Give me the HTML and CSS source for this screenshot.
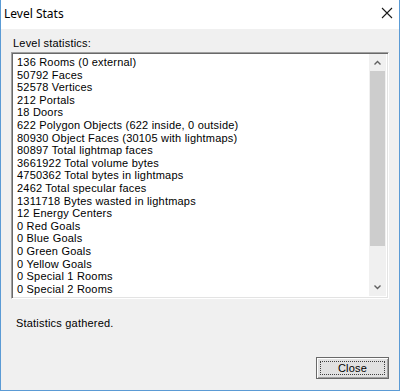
FILE: index.html
```html
<!DOCTYPE html>
<html>
<head>
<meta charset="utf-8">
<link rel="stylesheet" href="styles.css">
</head>
<body>
<div class="window">
  <div class="titlebar">
    <span class="title">Level Stats</span>
    <svg class="xbtn" width="12" height="12" viewBox="0 0 12 12"><path d="M1 1 L11 11 M11 1 L1 11" stroke="#1a1a1a" stroke-width="1.1" fill="none"/></svg>
  </div>
  <div class="client">
    <div class="label">Level statistics:</div>
    <div class="listbox">
      <div class="items">
        <div>136 Rooms (0 external)</div>
        <div>50792 Faces</div>
        <div>52578 Vertices</div>
        <div>212 Portals</div>
        <div>18 Doors</div>
        <div>622 Polygon Objects (622 inside, 0 outside)</div>
        <div>80930 Object Faces (30105 with lightmaps)</div>
        <div>80897 Total lightmap faces</div>
        <div>3661922 Total volume bytes</div>
        <div>4750362 Total bytes in lightmaps</div>
        <div>2462 Total specular faces</div>
        <div>1311718 Bytes wasted in lightmaps</div>
        <div>12 Energy Centers</div>
        <div>0 Red Goals</div>
        <div>0 Blue Goals</div>
        <div>0 Green Goals</div>
        <div>0 Yellow Goals</div>
        <div>0 Special 1 Rooms</div>
        <div>0 Special 2 Rooms</div>
        <div>0 Special 3 Rooms</div>
      </div>
      <div class="scrollbar">
        <div class="arrow"><svg width="7" height="5" viewBox="0 0 7 5"><path d="M0.5 4.5 L3.5 1.5 L6.5 4.5" stroke="#606060" stroke-width="1.4" fill="none"/></svg></div>
        <div class="track"><div class="thumb"></div></div>
        <div class="arrow"><svg width="7" height="5" viewBox="0 0 7 5"><path d="M0.5 0.5 L3.5 3.5 L6.5 0.5" stroke="#606060" stroke-width="1.4" fill="none"/></svg></div>
      </div>
    </div>
    <div class="status">Statistics gathered.</div>
    <div class="buttons">
      <button class="btn"><span class="focus">Close</span></button>
    </div>
  </div>
</div>
</body>
</html>
```
FILE: styles.css
```css
html, body {
  margin: 0;
  padding: 0;
  width: 400px;
  height: 391px;
  overflow: hidden;
}
.window {
  width: 400px;
  height: 391px;
  box-sizing: border-box;
  border: 1px solid #5b9bd5;
  border-top: none;
  display: flex;
  flex-direction: column;
  background: #f0f0f0;
}
.titlebar {
  height: 29px;
  background: #ffffff;
  display: flex;
  align-items: center;
  justify-content: space-between;
  padding: 0 6px 0 3px;
  flex: none;
}
.title {
  font-family: "Noto Sans", "Open Sans", sans-serif;
  font-size: 12px;
  color: #000;
  margin-top: -3px;
}
.xbtn {
  margin-top: -3px;
}
.client {
  flex: 1;
  display: flex;
  flex-direction: column;
  padding: 8px 10px 11px 10px;
  font-family: "Liberation Sans", Arial, sans-serif;
  font-size: 11px;
  letter-spacing: 0.2px;
  color: #000;
}
.label {
  padding-left: 2px;
  height: 15px;
  line-height: 13px;
  margin-bottom: 0;
}
.listbox {
  height: 247px;
  box-sizing: border-box;
  border-top: 1px solid #a0a0a0;
  border-left: 1px solid #a0a0a0;
  border-right: 1px solid #ffffff;
  border-bottom: 1px solid #ffffff;
  box-shadow: inset 1px 1px 0 #696969, inset -1px -1px 0 #e3e3e3;
  background: #fff;
  display: flex;
  overflow: hidden;
  padding: 2px 2px 1px 2px;
}
.items {
  flex: 1;
  padding-left: 3px;
  padding-top: 1px;
  overflow: hidden;
  line-height: 12.6px;
  white-space: nowrap;
}
.scrollbar {
  width: 17px;
  display: flex;
  flex-direction: column;
  background: #f0f0f0;
  flex: none;
  margin-top: -1px;
  margin-bottom: 1px;
}
.arrow {
  height: 17px;
  display: flex;
  align-items: center;
  justify-content: center;
  flex: none;
}
.track {
  flex: 1;
  display: flex;
  flex-direction: column;
}
.thumb {
  margin: 0 1px;
  height: 175px;
  background: #cdcdcd;
}
.status {
  padding-left: 5px;
  margin-top: 18px;
  line-height: 13px;
}
.buttons {
  margin-top: auto;
  display: flex;
  justify-content: flex-end;
}
.btn {
  width: 73px;
  height: 22px;
  box-sizing: border-box;
  border: 1px solid #696969;
  background: #e1e1e1;
  box-shadow: inset 1px 1px 0 #ffffff, inset -1px -1px 0 #a0a0a0;
  padding: 3px;
  margin: 0;
  font-family: "Liberation Sans", Arial, sans-serif;
  font-size: 11px;
  letter-spacing: 0.2px;
  color: #000;
  display: flex;
}
.focus {
  flex: 1;
  border: 1px dotted #404040;
  display: flex;
  align-items: center;
  justify-content: center;
  line-height: 12px;
}
```
